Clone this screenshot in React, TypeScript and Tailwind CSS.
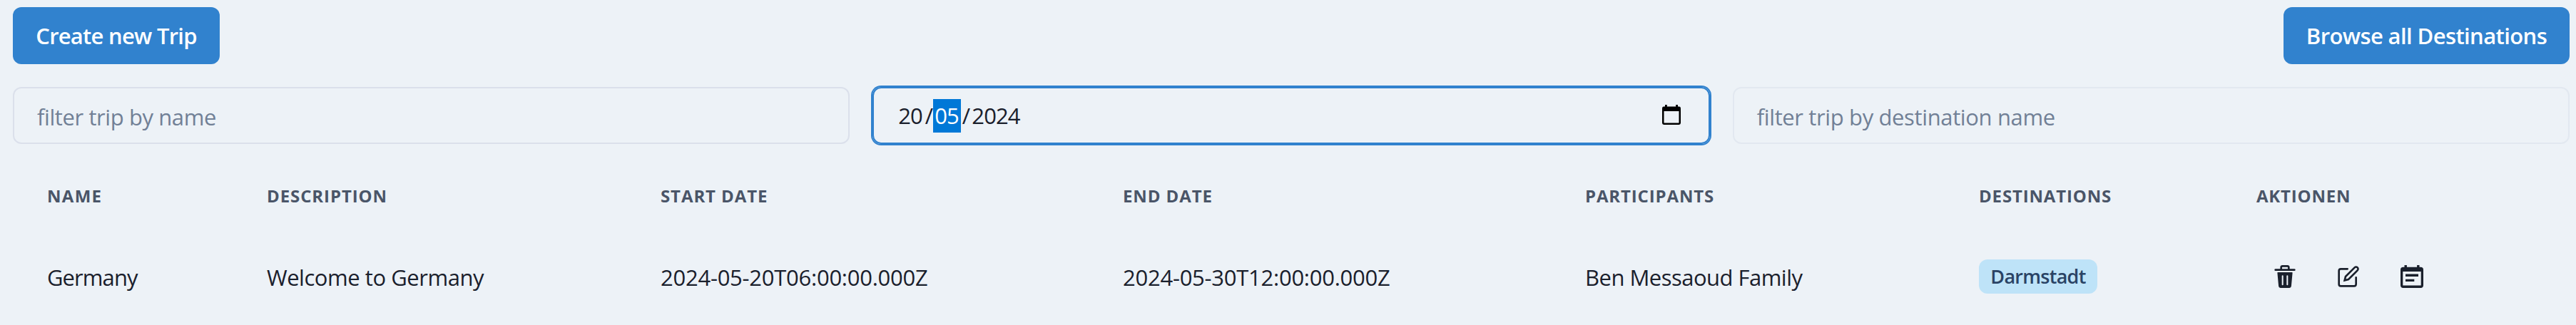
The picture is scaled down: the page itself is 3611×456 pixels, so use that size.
import type { ReactNode } from "react";

function DeleteIcon() {
  return (
    <svg viewBox="0 0 24 24" className="size-8" fill="currentColor">
      <path d="M19.452 7.5H4.547a.5.5 0 00-.5.545l1.287 14.136A2 2 0 007.326 24h9.347a2 2 0 001.992-1.819L19.95 8.045a.5.5 0 00-.129-.382.5.5 0 00-.369-.163zm-9.2 13a.75.75 0 01-1.5 0v-9a.75.75 0 011.5 0zm5 0a.75.75 0 01-1.5 0v-9a.75.75 0 011.5 0zM22 4h-4.75a.25.25 0 01-.25-.25V2.5A2.5 2.5 0 0014.5 0h-5A2.5 2.5 0 007 2.5v1.25a.25.25 0 01-.25.25H2a1 1 0 000 2h20a1 1 0 000-2zM9 3.75V2.5a.5.5 0 01.5-.5h5a.5.5 0 01.5.5v1.25a.25.25 0 01-.25.25h-5.5A.25.25 0 019 3.75z" />
    </svg>
  );
}

function EditIcon() {
  return (
    <svg
      viewBox="0 0 24 24"
      className="size-8"
      fill="none"
      stroke="currentColor"
      strokeLinecap="round"
      strokeWidth="2"
    >
      <path d="M11 4H4a2 2 0 0 0-2 2v14a2 2 0 0 0 2 2h14a2 2 0 0 0 2-2v-7" />
      <path d="M18.5 2.5a2.121 2.121 0 0 1 3 3L12 15l-4 1 1-4 9.5-9.5z" />
    </svg>
  );
}

function PlanIcon() {
  return (
    <svg viewBox="0 0 32 32" className="size-8" fill="currentColor">
      <path
        fillRule="evenodd"
        d="M5.5 0h3.4v2.7h14.2V0h3.4v2.7h1.8A3.7 3.7 0 0 1 32 6.4v21.9a3.7 3.7 0 0 1-3.7 3.7H3.7A3.7 3.7 0 0 1 0 28.3V6.4a3.7 3.7 0 0 1 3.7-3.7h1.8zM3.3 8.9v19.6h25.4V8.9z"
      />
      <path d="M7 12.5h18v3.4H7zM7 19.7h12.3v3.4H7z" />
    </svg>
  );
}

function PickerIcon() {
  return (
    <svg viewBox="0 0 26 28" className="mb-0.5 h-7 w-[26px]" fill="#000">
      <path
        fillRule="evenodd"
        d="M4 0h2.8v2.6h12.4V0H22v2.6h1.6A2.4 2.4 0 0 1 26 5v20.6a2.4 2.4 0 0 1-2.4 2.4H2.4A2.4 2.4 0 0 1 0 25.6V5a2.4 2.4 0 0 1 2.4-2.4H4zM2.5 9v16.5h21V9z"
      />
    </svg>
  );
}

function Button({ children, className }: { children: ReactNode; className: string }) {
  return (
    <button
      className={
        "flex h-20 items-center justify-center whitespace-nowrap rounded-xl bg-[#3182ce] text-[31px] font-semibold leading-[48px] text-white " +
        className
      }
    >
      {children}
    </button>
  );
}

const columns = [
  { label: "Name", tracking: "tracking-[1.3px]" },
  { label: "Description", tracking: "tracking-[0.9px]" },
  { label: "Start Date", tracking: "tracking-[0.9px]" },
  { label: "End Date", tracking: "tracking-[0.9px]" },
  { label: "Participants", tracking: "tracking-[0.86px]" },
  { label: "Destinations", tracking: "tracking-[0.84px]" },
  { label: "Aktionen", tracking: "pl-px tracking-[0.8px]" },
];

const grid = "grid grid-cols-[308px_552px_648px_648px_552px_388px_1fr] items-center pl-12";

export default function App() {
  return (
    <div
      className="h-[456px] w-full overflow-hidden bg-[#edf2f7] px-[18px] pt-[10px] text-[#1a202c]"
      style={{ fontFamily: '"Segoe UI", "Open Sans", sans-serif' }}
    >
      <div className="flex w-[3584px] justify-between">
        <Button className="w-[290px] tracking-[-0.75px]">Create new Trip</Button>
        <Button className="w-[401px] tracking-[-0.6px]">Browse all Destinations</Button>
      </div>

      <div className="mt-8 grid w-[3584px] grid-cols-3 gap-8">
        <div className="flex h-20 items-center rounded-xl border-2 border-[#dbe0eb] px-8 pt-[3px] text-[31px] leading-[48px] tracking-[-0.41px] text-[#718096]">
          filter trip by name
        </div>
        <div className="flex h-20 items-center justify-between rounded-xl border-2 border-[#3182ce] pl-[34px] pr-[39px] text-[31px] shadow-[0_0_0_2px_#3182ce]">
          <div className="flex items-center leading-[49px] tracking-[-1px]">
            <span className="w-[36px]">20</span>
            <span className="w-[13px] text-center">/</span>
            <span className="h-[47px] w-[39px] bg-[#0078d7] pl-[2px] leading-[47px] text-white">05</span>
            <span className="w-[13px] text-center">/</span>
            <span className="pl-[2px] tracking-[-0.9px]">2024</span>
          </div>
          <PickerIcon />
        </div>
        <div className="flex h-20 items-center rounded-xl border-2 border-[#e2e8f0] px-8 pt-[3px] text-[31px] leading-[48px] tracking-[-0.37px] text-[#718096]">
          filter trip by destination name
        </div>
      </div>

      <div className={grid + " mt-[37px] h-[72px] text-2xl font-bold uppercase leading-8 text-[#4a5568]"}>
        {columns.map((c) => (
          <div key={c.label} className={c.tracking}>
            {c.label}
          </div>
        ))}
      </div>

      <div className={grid + " mt-8 h-[90px] whitespace-nowrap text-[31px] leading-10"}>
        <div className="pt-0.5 tracking-[-0.93px]">Germany</div>
        <div className="pt-0.5 tracking-[-0.46px]">Welcome to Germany</div>
        <div className="pt-0.5 tracking-[-0.25px]">2024-05-20T06:00:00.000Z</div>
        <div className="pt-0.5 tracking-[-0.25px]">2024-05-30T12:00:00.000Z</div>
        <div className="pt-0.5 tracking-[-0.52px]">Ben Messaoud Family</div>
        <div className="flex">
          <span className="flex h-12 w-[166px] items-center justify-center rounded-xl bg-[#bee3f8] text-[27px] font-semibold tracking-[-0.73px] text-[#2a4365]">
            Darmstadt
          </span>
        </div>
        <div className="flex items-center gap-[57px] pl-[25px]">
          <DeleteIcon />
          <EditIcon />
          <PlanIcon />
        </div>
      </div>
    </div>
  );
}
